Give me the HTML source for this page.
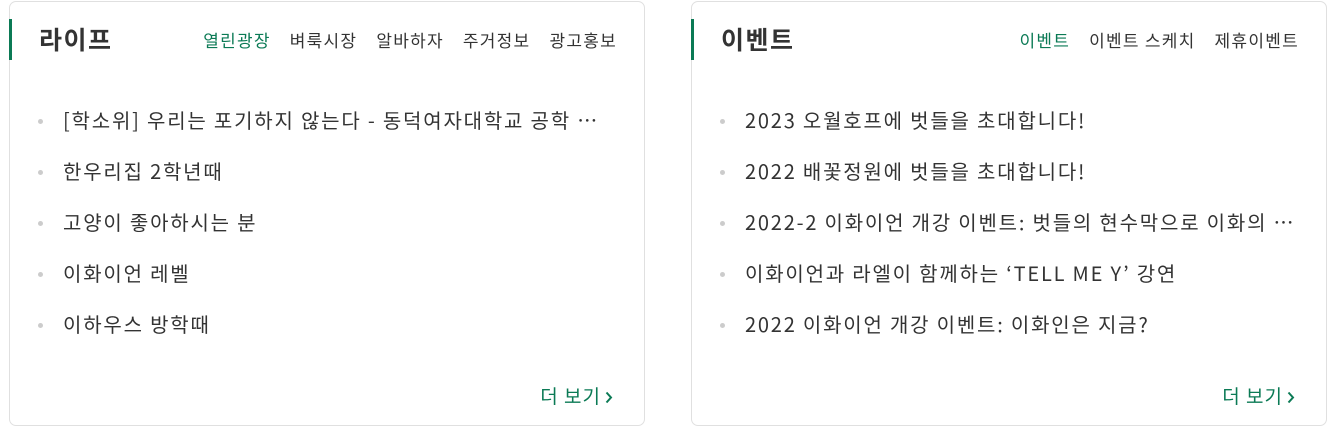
<!DOCTYPE html><html><head><meta charset="utf-8"><style>
body{margin:0;width:1327px;height:433px;background:#fff;font-family:"Noto Sans CJK KR","Liberation Sans",sans-serif;position:relative;overflow:hidden}
.card{position:absolute;top:1px;width:636px;height:425px;border:1px solid #e0e0e0;border-radius:7px;box-sizing:border-box}
.bar{position:absolute;left:-1px;top:17px;width:3px;height:41px;background:#0b7a55}
.title{position:absolute;left:29px;top:19px;font-size:25px;font-weight:bold;color:#333;line-height:36px;letter-spacing:1.5px}
.tabs{position:absolute;right:27px;top:26px;font-size:17px;color:#333;line-height:24px;white-space:nowrap;letter-spacing:1.25px}
.tabs span{margin-left:19px}.tabs .on{color:#0b7a55}
ul{position:absolute;left:0;top:96px;margin:0;padding:0;list-style:none}
li{position:relative;padding-left:53px;height:51px;font-size:20px;color:#333;line-height:44px;white-space:nowrap;letter-spacing:1.8px}
li:before{content:"";position:absolute;left:28px;top:21px;width:5px;height:5px;border-radius:50%;background:#ccc}
.more{position:absolute;right:31px;top:380px;font-size:19px;color:#0b7a55;line-height:28px;white-space:nowrap;letter-spacing:1px}
.more svg{vertical-align:-1px;margin-left:4px}
</style></head><body>
<div class="card" style="left:9px"><div class="bar"></div><div class="title">라이프</div>
<div class="tabs"><span class="on">열린광장</span><span>벼룩시장</span><span>알바하자</span><span>주거정보</span><span>광고홍보</span></div>
<ul><li>[학소위] 우리는 포기하지 않는다 - 동덕여자대학교 공학 …</li><li>한우리집 2학년때</li><li>고양이 좋아하시는 분</li><li>이화이언 레벨</li><li>이하우스 방학때</li></ul>
<div class="more">더 보기<svg width="8" height="13" viewBox="0 0 8 13"><path d="M1.5 1.5L6 6.5L1.5 11.5" fill="none" stroke="#0b7a55" stroke-width="2"/></svg></div></div>
<div class="card" style="left:691px"><div class="bar"></div><div class="title">이벤트</div>
<div class="tabs"><span class="on">이벤트</span><span>이벤트 스케치</span><span>제휴이벤트</span></div>
<ul><li>2023 오월호프에 벗들을 초대합니다!</li><li>2022 배꽃정원에 벗들을 초대합니다!</li><li>2022-2 이화이언 개강 이벤트: 벗들의 현수막으로 이화의 …</li><li>이화이언과 라엘이 함께하는 ‘TELL ME Y’ 강연</li><li>2022 이화이언 개강 이벤트: 이화인은 지금?</li></ul>
<div class="more">더 보기<svg width="8" height="13" viewBox="0 0 8 13"><path d="M1.5 1.5L6 6.5L1.5 11.5" fill="none" stroke="#0b7a55" stroke-width="2"/></svg></div></div>
</body></html>
